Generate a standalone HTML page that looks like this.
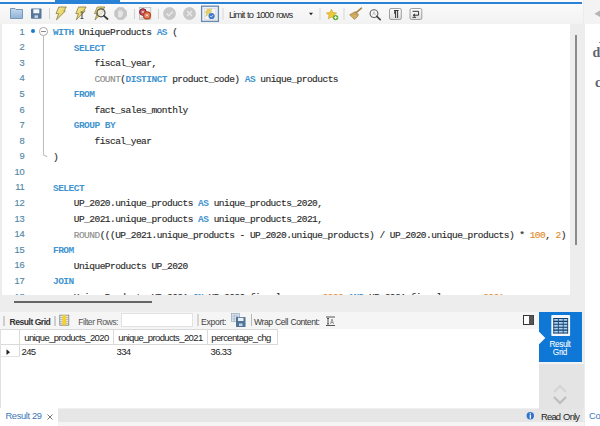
<!DOCTYPE html>
<html><head><meta charset="utf-8">
<style>
*{margin:0;padding:0;box-sizing:border-box}
html,body{width:600px;height:426px;overflow:hidden;background:#f0f0f0;position:relative;font-family:"Liberation Sans",sans-serif}
.a{position:absolute}
#topline{left:0;top:2px;width:582px;height:2px;background:#2a82d6}
#toptab{left:55px;top:0;width:65px;height:4px;background:#2a82d6}
#tb{left:0;top:0;width:583px;height:24px;background:linear-gradient(#fbfbfb,#f2f2f2)}
#editor{left:0;top:24px;width:570px;height:271px;background:#fff;overflow:hidden;border-left:2px solid #ececec}
#codetxt{left:51px;top:1px}
#lnum{left:0;top:0.7px;line-height:15.58px;white-space:pre}
#dot{left:28.6px;top:4.8px;width:4.5px;height:4.5px;border-radius:50%;background:#1a7ad0}
#fold{left:37px;top:3.4px;width:8.5px;height:8.5px;border-radius:50%;border:1px solid #a8a8a8;background:#fff}
#fold:after{content:"";position:absolute;left:1.3px;top:2.9px;width:4.5px;height:0.8px;background:#8a8a8a}
#foldline{left:41px;top:11.5px;width:1px;height:118.5px;background:#bcbcbc}
#foldend{left:41.4px;top:129.6px;width:4.6px;height:1px;background:#bcbcbc;transform:rotate(28deg);transform-origin:0 0}

#vscroll{left:570px;top:24px;width:14px;height:288px;background:#ededed}
#vthumb{left:575px;top:35px;width:2px;height:210px;background:#8a8a8a}
#hscroll{left:0;top:295px;width:584px;height:17px;background:#ededed}
#hthumb{left:13.5px;top:300.8px;width:138px;height:1.8px;background:#666}
#rightpanel{left:583px;top:0;width:17px;height:426px;background:#fff;border-left:2px solid #ececec}
.code{font-family:"Liberation Mono",monospace;font-size:9.5px;letter-spacing:-0.52px;-webkit-text-stroke:0.15px currentColor;color:#2b2b2b;white-space:pre;line-height:15.58px}
.ln{position:absolute;left:0;width:22.3px;text-align:right;font-family:"Liberation Sans",sans-serif;font-size:9.3px;color:#5288a6;letter-spacing:-0.3px;-webkit-text-stroke:0.15px #5288a6}
.k{color:#4294d0;font-weight:bold;-webkit-text-stroke:0}
.f{color:#8d8d8d}
.n{color:#e58a2c}
#restb{left:0;top:312px;width:539px;height:17px;background:#f5f5f5}
#grid{left:0;top:329px;width:539px;height:79px;background:#fff}
#status{left:0;top:409px;width:583px;height:13px;background:#e6e6e6}
#botstrip{left:0;top:422px;width:584px;height:4px;background:#f4f4f4}
#restab{left:0;top:408px;width:58px;height:18px;background:#fff}
#bluepanel{left:539px;top:312px;width:43px;height:50px;background:#0f77d6}
#graypanel{left:539px;top:362px;width:45px;height:47px;background:#e4e4e4;border-top:2px solid #f2f2f2}
.ui{font-family:"Liberation Sans",sans-serif;font-size:8.6px;color:#333;white-space:nowrap;letter-spacing:-0.3px;line-height:10px}
.gt{font-family:"Liberation Sans",sans-serif;font-size:9.5px;color:#222;white-space:nowrap;line-height:10px;letter-spacing:-0.62px}
</style></head><body>
<div class="a" id="tb"></div>
<div class="a" id="topline"></div>
<div class="a" id="toptab"></div>
<div class="a" id="rightpanel"></div>
<div class="a" style="left:584px;top:0;width:16px;height:24px;background:#f3f3f4"></div>
<div class="a" style="left:592.5px;top:45.5px;font-family:'Liberation Serif',serif;font-weight:bold;font-size:14px;color:#5f6470;line-height:14px">d</div>
<div class="a" style="left:595px;top:75.5px;font-family:'Liberation Serif',serif;font-weight:bold;font-size:14px;color:#5f6470;line-height:14px">c</div>
<div class="a" style="left:598.5px;top:41.5px;width:1px;height:1px;background:#888"></div>
<svg class="a" id="icons" style="left:0;top:0" width="600" height="426" viewBox="0 0 600 426">
<defs>
<linearGradient id="gFold" x1="0" y1="0" x2="0" y2="1"><stop offset="0" stop-color="#c3d9ee"/><stop offset="1" stop-color="#8fb2d6"/></linearGradient>
<linearGradient id="gBolt" x1="0" y1="0" x2="1" y2="1"><stop offset="0" stop-color="#f4eaa0"/><stop offset="1" stop-color="#e0c238"/></linearGradient>
<linearGradient id="gBtn" x1="0" y1="0" x2="0" y2="1"><stop offset="0" stop-color="#ffffff"/><stop offset="1" stop-color="#dcdcdc"/></linearGradient>
</defs>
<!-- folder -->
<path d="M10.5 18.5 V8.5 H15 L16 9.5 H22.5 V18.5 Z" fill="url(#gFold)" stroke="#7896b5" stroke-width="1" stroke-linejoin="round"/>
<!-- floppy -->
<rect x="31" y="8.5" width="10.5" height="10.2" rx="0.8" fill="#56779b"/>
<rect x="33.3" y="9.3" width="6" height="4" fill="#f4f6f8"/>
<rect x="34.5" y="15.3" width="3.5" height="2.6" fill="#cbd6e2"/>
<!-- sep -->
<rect x="49" y="8" width="1" height="11" fill="#d2d2d2"/>
<!-- bolt 1 -->
<path d="M58.8 7.0 L66.3 7.0 L63.8 11.0 L65.4 11.0 L56.5 19.8 L58.6 13.6 L56.0 13.6 Z" fill="url(#gBolt)" stroke="#8c7c3e" stroke-width="0.8" stroke-linejoin="round"/>
<!-- bolt 2 with cursor -->
<path d="M78.6 7.0 L86.1 7.0 L83.6 11.0 L85.2 11.0 L76.3 19.8 L78.4 13.6 L75.8 13.6 Z" fill="url(#gBolt)" stroke="#8c7c3e" stroke-width="0.8" stroke-linejoin="round"/>
<path d="M80.5 12 H83.5 M82 12 V18.5 M80.5 18.5 H83.5" stroke="#555" stroke-width="1.1" fill="none"/>
<!-- bolt 3 with magnifier -->
<path d="M97.3 7.0 L104.8 7.0 L102.3 11.0 L103.9 11.0 L95.0 19.8 L97.1 13.6 L94.5 13.6 Z" fill="url(#gBolt)" stroke="#8c7c3e" stroke-width="0.8" stroke-linejoin="round"/>
<circle cx="101" cy="12.8" r="4" fill="#eef2ee" fill-opacity="0.7" stroke="#4d4d4d" stroke-width="1.2"/>
<path d="M104 15.8 L107.5 19" stroke="#3a3a3a" stroke-width="1.8" stroke-linecap="round"/>
<!-- stop gray -->
<path d="M126.51 15.95 L123.05 19.41 L118.15 19.41 L114.69 15.95 L114.69 11.05 L118.15 7.59 L123.05 7.59 L126.51 11.05 Z" fill="#c6c6c6" stroke="#b8b8b8" stroke-width="0.5"/>
<path d="M118.2 17.2 L118.2 11.4 Q118.2 10.6 119 10.6 L119 13 L119.4 9.6 Q120.2 9.2 120.4 10 L120.4 12.6 L121 9.8 Q121.8 9.6 121.9 10.4 L121.8 13 L122.6 11.2 Q123.3 11.1 123.3 11.9 L122.6 15.4 Q121.9 17.4 120.2 17.4 Z" fill="#e6e6e6"/>
<rect x="134" y="9" width="1" height="10" fill="#d2d2d2"/>
<!-- red icon -->
<rect x="139.5" y="7.5" width="11.3" height="11.8" fill="#f2f2f2" stroke="#b4b4b4" stroke-width="0.7"/>
<path d="M140.5 17.8 H146" stroke="#9a9a9a" stroke-width="0.7"/>
<circle cx="142.9" cy="12" r="3.3" fill="#c25a6a" stroke="#7d1626" stroke-width="1"/>
<path d="M141.9 11 L143.9 13 M143.9 11 L141.9 13" stroke="#f7d8dc" stroke-width="0.8"/>
<circle cx="147" cy="15.4" r="3.5" fill="#e07a58" stroke="#b8401c" stroke-width="1.1"/>
<path d="M146 14.4 L148 16.4 M148 14.4 L146 16.4" stroke="#fff" stroke-width="0.9"/>
<rect x="158" y="9" width="1" height="10" fill="#d2d2d2"/>
<!-- check gray -->
<circle cx="169.5" cy="13.5" r="6.4" fill="#c8c8c8"/>
<path d="M166.5 13.5 L168.8 15.8 L172.8 11.5" stroke="#e9e9e9" stroke-width="1.4" fill="none"/>
<!-- x gray -->
<circle cx="189.5" cy="13.5" r="6.4" fill="#c8c8c8"/>
<path d="M187 11 L192 16 M192 11 L187 16" stroke="#e9e9e9" stroke-width="1.4"/>
<!-- toggle -->
<rect x="201.6" y="6.2" width="16.8" height="15.2" fill="#eef3f8" stroke="#6689ad" stroke-width="1.3"/>
<rect x="204.3" y="8.6" width="11.6" height="10.8" fill="#f7f5f5" stroke="#d8cfd6" stroke-width="0.6"/>
<path d="M207.5 9 L212 9 L209.8 11.6 L211.8 11.6 L205.6 16.5 L206.9 12.8 L205.2 12.8 Z" fill="#e3d266" stroke="#c0b050" stroke-width="0.4"/>
<circle cx="211.6" cy="16" r="3.1" fill="#3f78c8"/>
<path d="M210.1 16 L211.3 17.1 L213.2 14.9" stroke="#e8f0ff" stroke-width="0.8" fill="none"/>
<rect x="222.5" y="8" width="1" height="12" fill="#d8d8d8"/>
<!-- dropdown arrow -->
<path d="M309 12.8 L313 12.8 L311 15.2 Z" fill="#222"/>
<rect x="319.5" y="8" width="1" height="12" fill="#d8d8d8"/>
<!-- star -->
<path d="M331.5 9.3 L333 12.6 L336.6 13 L333.9 15.3 L334.7 18.8 L331.5 17 L328.3 18.8 L329.1 15.3 L326.4 13 L330 12.6 Z" fill="#f0c93a" stroke="#c99a1e" stroke-width="0.6" stroke-linejoin="round"/>
<circle cx="335.6" cy="17.6" r="2.7" fill="#5cae3a"/>
<path d="M334.1 17.6 H337.1 M335.6 16.1 V19.1" stroke="#fff" stroke-width="0.9"/>
<rect x="343.5" y="8" width="1" height="12" fill="#d8d8d8"/>
<!-- broom -->
<path d="M349.6 14.8 L355.2 11.6 L358.6 14.6 Q357.5 17.6 354.4 19.4 Q352.2 17.3 349.6 14.8 Z" fill="#c9a45a" stroke="#9c7a3c" stroke-width="0.6" stroke-linejoin="round"/>
<path d="M356.2 12.6 L361.4 8.2" stroke="#a88443" stroke-width="1.6" stroke-linecap="round"/>
<path d="M351.5 15.6 L355.5 18 M353.2 14.6 L356.6 17" stroke="#e2c98a" stroke-width="0.5"/>
<!-- magnifier -->
<circle cx="374" cy="13.6" r="3.9" fill="#fafafa" stroke="#606060" stroke-width="1.1"/>
<path d="M376.8 16.4 L380.2 19.6" stroke="#404040" stroke-width="1.6" stroke-linecap="round"/>
<path d="M372.6 15.2 L374 11.8 L375.4 15.2" stroke="#909090" stroke-width="0.6" fill="none"/>
<!-- pilcrow button -->
<rect x="389.5" y="8.5" width="11.8" height="11" rx="1.5" fill="url(#gBtn)" stroke="#8a8a8a" stroke-width="0.8"/>
<path d="M394 10.5 H398.6 M395.6 10.5 V18 M397.6 10.5 V18" stroke="#333" stroke-width="1"/>
<path d="M395.4 10.5 A2 2 0 0 0 395.4 14.3 Z" fill="#333"/>
<!-- wrap button -->
<rect x="410" y="8.5" width="11.8" height="11" rx="1.5" fill="url(#gBtn)" stroke="#8a8a8a" stroke-width="0.8"/>
<path d="M412.6 11.3 H418.6 V15.2 H413.6" stroke="#333" stroke-width="1" fill="none"/>
<path d="M414.8 13.3 L412.8 15.2 L414.8 17.1 Z" fill="#333"/>
<path d="M412.6 17.3 H416" stroke="#333" stroke-width="1"/>
<!-- right panel triangle -->
<path d="M594.5 13.8 L600 10.5 L600 17 Z" fill="#b4b4b4"/>
</svg>
<div class="a ui" style="left:229px;top:9.7px;font-size:9.4px;color:#2a2a2a;letter-spacing:-0.88px;word-spacing:1.0px">Limit to 1000 rows</div>


<div class="a" id="editor">
  <div class="a code" id="codetxt"><span class="k">WITH</span> UniqueProducts <span class="k">AS</span> (
    <span class="k">SELECT</span>
        fiscal_year,
        <span class="f">COUNT</span>(<span class="k">DISTINCT</span> product_code) <span class="k">AS</span> unique_products
    <span class="k">FROM</span>
        fact_sales_monthly
    <span class="k">GROUP BY</span>
        fiscal_year
)

<span class="k">SELECT</span>
    UP_2020.unique_products <span class="k">AS</span> unique_products_2020,
    UP_2021.unique_products <span class="k">AS</span> unique_products_2021,
    <span class="f">ROUND</span>(((UP_2021.unique_products - UP_2020.unique_products) / UP_2020.unique_products) * <span class="n">100</span>, <span class="n">2</span>)
<span class="k">FROM</span>
    UniqueProducts UP_2020
<span class="k">JOIN</span>
    UniqueProducts UP_2021 <span class="k">ON</span> UP_2020.fiscal_year = <span class="n">2020</span> <span class="k">AND</span> UP_2021.fiscal_year = <span class="n">2021</span></div>
  <div class="a ln" id="lnum">1
2
3
4
5
6
7
8
9
10
11
12
13
14
15
16
17
18</div>
  <div class="a" id="dot"></div>
  <div class="a" id="fold"></div>
  <div class="a" id="foldline"></div>
  <div class="a" id="foldend"></div>
</div>
<div class="a" id="vscroll"></div>
<div class="a" id="vthumb"></div>
<div class="a" id="hscroll"></div>
<div class="a" id="hthumb"></div>


<div class="a" id="restb"></div>
<div class="a" id="grid">
  <div class="a" style="left:0;top:0;width:278px;height:16px;border-top:1px solid #dadada;border-bottom:1px solid #dadada"></div>
  <div class="a" style="left:19px;top:0;width:1px;height:28px;background:#dadada"></div>
  <div class="a" style="left:0;top:0;width:1px;height:28px;background:#dadada"></div>
  <div class="a" style="left:113px;top:0;width:1px;height:16px;background:#dadada"></div>
  <div class="a" style="left:207px;top:0;width:1px;height:16px;background:#dadada"></div>
  <div class="a" style="left:277px;top:0;width:1px;height:16px;background:#dadada"></div>
  <div class="a" style="left:0;top:27px;width:20px;height:1px;background:#e3e3e3"></div>
  <div class="a gt" style="left:24.3px;top:4px">unique_products_2020</div>
  <div class="a gt" style="left:118.3px;top:4px">unique_products_2021</div>
  <div class="a gt" style="left:211.3px;top:4px">percentage_chg</div>
  <div class="a gt" style="left:21.5px;top:17.5px">245</div>
  <div class="a gt" style="left:116.5px;top:17.5px">334</div>
  <div class="a gt" style="left:210.5px;top:17.5px">36.33</div>
</div>
<div class="a" id="bluepanel"></div>
<div class="a" id="graypanel"></div>
<div class="a" id="status"></div>
<div class="a" id="botstrip"></div>
<div class="a" style="left:0;top:329px;width:1px;height:97px;background:#e0e0e0"></div>
<div class="a" id="restab"></div>
<div class="a ui" style="left:9.5px;top:317px;font-weight:bold;color:#333;letter-spacing:-0.5px">Result Grid</div>
<div class="a ui" style="left:78.3px;top:317px;color:#555;letter-spacing:-0.48px">Filter Rows:</div>
<div class="a" style="left:121px;top:313px;width:72px;height:14px;background:#fff;border:1px solid #e2e2e2"></div>
<div class="a ui" style="left:201px;top:317px;color:#444">Export:</div>
<div class="a ui" style="left:254px;top:317px;color:#3a3a3a;letter-spacing:-0.45px;word-spacing:0.5px">Wrap Cell Content:</div>
<div class="a ui" style="left:545px;top:340px;color:#fff;font-size:8.2px;width:30px;text-align:center;letter-spacing:-0.4px;-webkit-text-stroke:0.05px #fff">Result</div>
<div class="a ui" style="left:545px;top:347.5px;color:#fff;font-size:8.2px;width:30px;text-align:center;letter-spacing:-0.3px;-webkit-text-stroke:0.05px #fff">Grid</div>
<div class="a ui" style="left:541px;top:411.5px;color:#222;font-size:9.4px;letter-spacing:-0.78px;word-spacing:1px">Read Only</div>
<div class="a ui" style="left:5.5px;top:410.8px;color:#3c78b5;font-size:9.4px;letter-spacing:-0.4px">Result 29</div>
<div class="a ui" style="left:589px;top:411px;color:#3a7cc0;font-size:9.4px">Co</div>
<svg class="a" style="left:0;top:0" width="600" height="426" viewBox="0 0 600 426">
<rect x="3.5" y="316" width="1" height="10" fill="#a8a8a8"/>
<rect x="54.5" y="316" width="1" height="10" fill="#a8a8a8"/>
<rect x="197.5" y="314" width="1" height="12" fill="#b8b8b8"/>
<rect x="251" y="314" width="1" height="12" fill="#b8b8b8"/>
<!-- yellow grid icon -->
<rect x="59.8" y="315.2" width="9" height="10" fill="#f4f4f4" stroke="#7a7a80" stroke-width="0.8"/>
<path d="M59.8 317.6 H68.8 M59.8 319.6 H68.8 M59.8 321.6 H68.8 M59.8 323.6 H68.8" stroke="#9a9aa0" stroke-width="0.7"/>
<rect x="62.3" y="315.2" width="4" height="10" fill="#f1d230"/>
<!-- export icon -->
<rect x="231.5" y="313.5" width="8" height="8" fill="#dfe6ee" stroke="#8aa0b8" stroke-width="0.6"/>
<path d="M234.2 313.5 V321.5 M236.8 313.5 V321.5 M231.5 316.2 H239.5 M231.5 318.9 H239.5" stroke="#8aa0b8" stroke-width="0.5"/>
<rect x="236" y="317" width="9.5" height="10" rx="0.5" fill="#4f7496"/>
<rect x="238" y="317.8" width="5.5" height="3.2" fill="#e9eef3"/>
<rect x="239" y="323.5" width="3.5" height="2.5" fill="#c5d3e0"/>
<!-- wrap content icon -->
<path d="M326 317 H335 M326 325.5 H335" stroke="#555" stroke-width="1"/>
<path d="M328 318.5 V324 M327 318.5 H329 M327 324 H329" stroke="#444" stroke-width="0.9"/>
<path d="M330.5 324 L332 319 L333.5 324 M331 322.5 H333" stroke="#777" stroke-width="0.7" fill="none"/>
<!-- toggle panel icon -->
<rect x="523.5" y="315.5" width="10" height="9" fill="#fff" stroke="#333" stroke-width="1"/>
<rect x="529" y="315.5" width="4.5" height="9" fill="#555"/>
<!-- notch -->
<path d="M538.8 331.5 L545.3 338 L538.8 344.5 Z" fill="#fff"/>
<!-- result grid icon -->
<rect x="551.3" y="315" width="18.8" height="21" rx="0.8" fill="#f4f8fc"/>
<rect x="553.3" y="318.2" width="14.8" height="15.2" fill="#a9d3f3"/>
<path d="M553.3 318.5 H568.1 M553.3 321.4 H568.1 M553.3 324.3 H568.1 M553.3 327.2 H568.1 M553.3 330.1 H568.1 M553.3 333 H568.1" stroke="#163a62" stroke-width="1.1"/>
<path d="M553.8 318.2 V333.4 M558.4 318.2 V333.4 M563.2 318.2 V333.4 M567.6 318.2 V333.4" stroke="#1f4c7c" stroke-width="0.9"/>
<!-- chevrons -->
<path d="M554 392 L560 386 L566 392" stroke="#d4d4d4" stroke-width="2.2" fill="none"/>
<path d="M554 397 L560 403 L566 397" stroke="#bdbdbd" stroke-width="2.2" fill="none"/>
<!-- info icon -->
<circle cx="530.3" cy="415.8" r="3.7" fill="#2f74c8"/>
<rect x="529.7" y="413.2" width="1.3" height="1.2" fill="#fff"/>
<rect x="529.7" y="415" width="1.3" height="3.6" fill="#fff"/>
<!-- close x -->
<path d="M47.5 414.5 L52.5 419.5 M52.5 414.5 L47.5 419.5" stroke="#666" stroke-width="0.9"/>
<!-- row indicator -->
<path d="M6.5 349.3 L10 352.2 L6.5 355.1 Z" fill="#222"/>
</svg>
</body></html>
